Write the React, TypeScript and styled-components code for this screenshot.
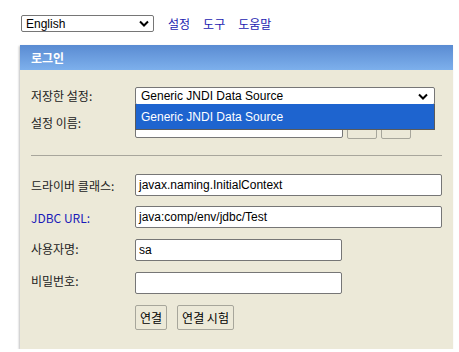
import React from "react";
import styled, { createGlobalStyle } from "styled-components";

const Global = createGlobalStyle`
  html, body { margin: 0; padding: 0; background: #ffffff; }
  body { font-family: "Liberation Sans", "Noto Sans CJK KR", Arial, sans-serif; font-size: 12px; color: #000; }
`;

const Page = styled.div`
  padding: 15px 6px 0 20px;
  width: 433px;
`;

const TopBar = styled.div`
  display: flex;
  align-items: center;
  gap: 14px;
  height: 17px;
  padding-left: 1px;
`;

const LangSelect = styled.div`
  box-sizing: border-box;
  width: 133px;
  height: 17px;
  border: 1px solid #767676;
  border-radius: 2px;
  display: flex;
  align-items: center;
  justify-content: space-between;
  padding: 0 4px 0 4px;
  font-size: 12px;
  background: #fff;
`;

const Links = styled.div`
  display: flex;
  gap: 13px;
  margin-left: 0px;
`;

const NavLink = styled.span`
  color: #1a1ab0;
  font-family: "Noto Sans CJK KR", sans-serif;
  font-size: 12px;
`;

const Panel = styled.div`
  margin-top: 13px;
  background: #ece9d8;
  box-shadow: -1px 1px 2px rgba(0, 0, 0, 0.25);
  height: 304px;
`;

const Header = styled.div`
  height: 25px;
  background: linear-gradient(#5a8bd2, #7db0ec);
  color: #fff;
  font-family: "Noto Sans CJK KR", sans-serif;
  font-weight: 700;
  font-size: 12px;
  display: flex;
  align-items: center;
  padding-left: 11px;
`;

const Body = styled.div`
  padding: 16px 11px 0 11px;
`;

const Row = styled.div<{ $h: number; $mt?: number }>`
  display: grid;
  grid-template-columns: 104px 1fr;
  align-items: start;
  height: ${(p) => p.$h}px;
  margin-top: ${(p) => p.$mt ?? 0}px;
`;

const Label = styled.div<{ $blue?: boolean; $top?: number }>`
  font-family: "Noto Sans CJK KR", sans-serif;
  font-size: 12px;
  color: ${(p) => (p.$blue ? "#1a1ab8" : "#222")};
  padding-top: ${(p) => p.$top ?? 0}px;
  line-height: 17px;
`;

const Field = styled.div<{ $w: number; $h?: number }>`
  box-sizing: border-box;
  width: ${(p) => p.$w}px;
  height: ${(p) => p.$h ?? 22}px;
  border: 1px solid #767676;
  border-radius: 2px;
  background: #fff;
  padding-left: 3px;
  display: flex;
  align-items: center;
  font-size: 12px;
`;

const SelectWrap = styled.div`
  position: relative;
`;

const Select = styled(Field)`
  justify-content: space-between;
  padding-right: 6px;
  padding-left: 5px;
`;

const DropList = styled.div`
  position: absolute;
  left: 0;
  top: 17px;
  width: 300px;
  box-sizing: border-box;
  height: 26px;
  background: #1e64cf;
  border: 1px solid #5a5a5a;
  border-top: none;
  color: #fff;
  font-size: 12px;
  display: flex;
  align-items: center;
  padding-left: 5px;
  z-index: 2;
`;

const Inline = styled.div`
  display: flex;
  gap: 4px;
  align-items: flex-start;
`;

const SmallBtn = styled.div<{ $w: number }>`
  box-sizing: border-box;
  width: ${(p) => p.$w}px;
  height: 26px;
  border: 1px solid #a7a69b;
  border-radius: 2px;
  background: #ece9d8;
`;

const Rule = styled.div`
  height: 1px;
  background: #a8a69c;
  width: 411px;
`;

const Btn = styled.div`
  box-sizing: border-box;
  height: 25px;
  border: 1px solid #a7a69b;
  border-radius: 2px;
  background: #ece9d8;
  padding: 0 4px;
  font-family: "Noto Sans CJK KR", sans-serif;
  font-size: 12px;
  display: flex;
  align-items: center;
`;

const BtnRow = styled.div`
  display: flex;
  gap: 10px;
`;

const Chevron = () => (
  <svg width="10" height="7" viewBox="0 0 10 7">
    <path d="M1 1.5 L5 5.5 L9 1.5" fill="none" stroke="#000" strokeWidth="2" />
  </svg>
);

export default function App() {
  return (
    <>
      <Global />
      <Page>
        <TopBar>
          <LangSelect>
            <span>English</span>
            <Chevron />
          </LangSelect>
          <Links>
            <NavLink>설정</NavLink>
            <NavLink>도구</NavLink>
            <NavLink>도움말</NavLink>
          </Links>
        </TopBar>
        <Panel>
          <Header>로그인</Header>
          <Body>
            <Row $h={26} $mt={1}>
              <Label $top={0}>저장한 설정:</Label>
              <SelectWrap>
                <Select $w={300} $h={18}>
                  <span>Generic JNDI Data Source</span>
                  <Chevron />
                </Select>
                <DropList>Generic JNDI Data Source</DropList>
              </SelectWrap>
            </Row>
            <Row $h={42}>
              <Label $top={1}>설정 이름:</Label>
              <Inline>
                <Field $w={208} $h={25} />
                <SmallBtn $w={30} />
                <SmallBtn $w={30} />
              </Inline>
            </Row>
            <Rule />
            <Row $h={32} $mt={18}>
              <Label $top={3}>드라이버 클래스:</Label>
              <Field $w={307}>javax.naming.InitialContext</Field>
            </Row>
            <Row $h={33}>
              <Label $blue $top={3}>JDBC URL:</Label>
              <Field $w={307}>java:comp/env/jdbc/Test</Field>
            </Row>
            <Row $h={33}>
              <Label $top={1}>사용자명:</Label>
              <Field $w={207}>sa</Field>
            </Row>
            <Row $h={33}>
              <Label $top={0}>비밀번호:</Label>
              <Field $w={207} />
            </Row>
            <Row $h={30}>
              <span />
              <BtnRow>
                <Btn>연결</Btn>
                <Btn>연결 시험</Btn>
              </BtnRow>
            </Row>
          </Body>
        </Panel>
      </Page>
    </>
  );
}
